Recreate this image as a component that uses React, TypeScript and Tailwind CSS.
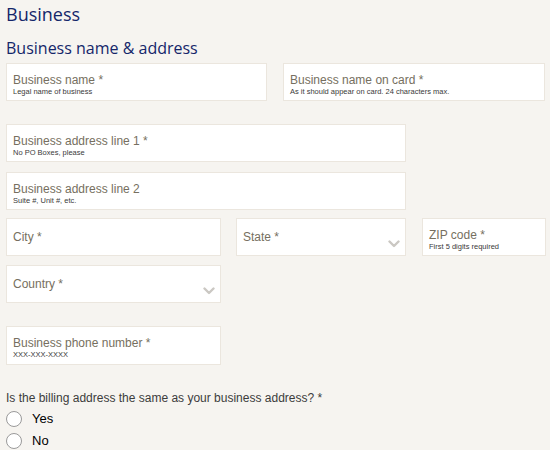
import React from 'react';

interface FieldProps {
  label: string;
  hint?: string;
  select?: boolean;
  className?: string;
}

function Chevron() {
  return (
    <svg width="12" height="8" viewBox="0 0 12 8" className="absolute right-[5px] top-[21px]">
      <path d="M1.5 1.5 L6 6 L10.5 1.5" fill="none" stroke="#cbc8c3" strokeWidth="2.4" strokeLinecap="round" strokeLinejoin="round" />
    </svg>
  );
}

function Field({ label, hint, select, className }: FieldProps) {
  return (
    <div
      className={`relative shrink-0 h-[38px] bg-white border border-[#ebe6de] flex flex-col justify-center px-[6px] ${hint ? 'pt-[5px]' : 'pt-[1px]'} ${className ?? ''}`}
    >
      <span className="text-[12px] leading-[13px] text-[#766f60]">{label}</span>
      {hint && <span className="text-[7.5px] leading-[9px] text-[#3a3a3a]">{hint}</span>}
      {select && <Chevron />}
    </div>
  );
}

function Radio({ label }: { label: string }) {
  return (
    <label className="flex items-center h-[22px]">
      <span className="w-[16px] h-[16px] rounded-full border border-[#9a9a9a] bg-white" />
      <span className="ml-[10px] text-[13px] text-black">{label}</span>
    </label>
  );
}

export default function App() {
  return (
    <div
      className="w-[550px] h-[450px] overflow-hidden bg-[#f6f4f0] pl-[6px] pr-[4px]"
      style={{ fontFamily: '"Liberation Sans", Arial, sans-serif' }}
    >
      <h1
        className="pt-[3px] text-[18px] leading-[22px] font-medium text-[#14266a]"
        style={{ fontFamily: '"Open Sans", "Noto Sans", sans-serif' }}
      >
        Business
      </h1>
      <h2
        className="mt-[13px] text-[16px] leading-[20px] font-medium text-[#14266a]"
        style={{ fontFamily: '"Open Sans", "Noto Sans", sans-serif' }}
      >
        Business name &amp; address
      </h2>

      <div className="mt-[5px] flex">
        <Field className="w-[261px]" label="Business name *" hint="Legal name of business" />
        <Field className="ml-[16px] w-[262px]" label="Business name on card *" hint="As it should appear on card. 24 characters max." />
      </div>

      <Field className="mt-[23px] w-[400px]" label="Business address line 1 *" hint="No PO Boxes, please" />
      <Field className="mt-[10px] w-[400px]" label="Business address line 2" hint="Suite #, Unit #, etc." />

      <div className="mt-[8px] flex">
        <Field className="w-[215px]" label="City *" />
        <Field className="ml-[15px] w-[170px]" label="State *" select />
        <Field className="ml-[16px] w-[124px]" label="ZIP code *" hint="First 5 digits required" />
      </div>

      <Field className="mt-[9px] w-[215px]" label="Country *" select />

      <Field className="mt-[23px] h-[39px] w-[215px]" label="Business phone number *" hint="XXX-XXX-XXXX" />

      <p className="mt-[25px] text-[12px] leading-[16px] text-[#3c3c3c]">
        Is the billing address the same as your business address? *
      </p>
      <div className="mt-[2px] flex flex-col">
        <Radio label="Yes" />
        <Radio label="No" />
      </div>
    </div>
  );
}
